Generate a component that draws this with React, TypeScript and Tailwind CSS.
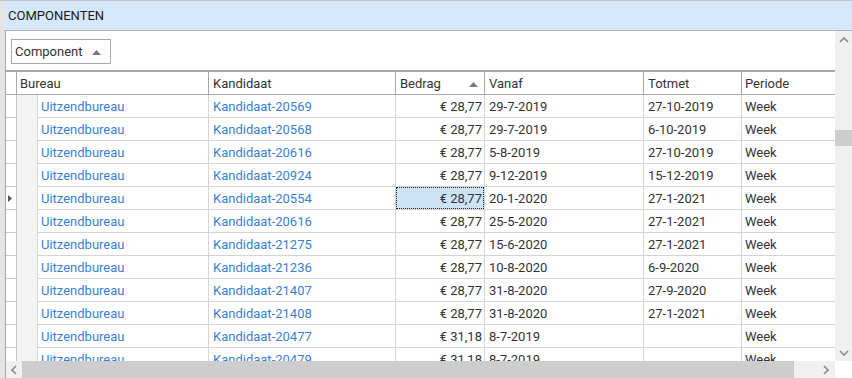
const rows = [
  { k: 'Kandidaat-20569', b: '€ 28,77', v: '29-7-2019', t: '27-10-2019' },
  { k: 'Kandidaat-20568', b: '€ 28,77', v: '29-7-2019', t: '6-10-2019' },
  { k: 'Kandidaat-20616', b: '€ 28,77', v: '5-8-2019', t: '27-10-2019' },
  { k: 'Kandidaat-20924', b: '€ 28,77', v: '9-12-2019', t: '15-12-2019' },
  { k: 'Kandidaat-20554', b: '€ 28,77', v: '20-1-2020', t: '27-1-2021', sel: true },
  { k: 'Kandidaat-20616', b: '€ 28,77', v: '25-5-2020', t: '27-1-2021' },
  { k: 'Kandidaat-21275', b: '€ 28,77', v: '15-6-2020', t: '27-1-2021' },
  { k: 'Kandidaat-21236', b: '€ 28,77', v: '10-8-2020', t: '6-9-2020' },
  { k: 'Kandidaat-21407', b: '€ 28,77', v: '31-8-2020', t: '27-9-2020' },
  { k: 'Kandidaat-21408', b: '€ 28,77', v: '31-8-2020', t: '27-1-2021' },
  { k: 'Kandidaat-20477', b: '€ 31,18', v: '8-7-2019', t: '' },
  { k: 'Kandidaat-20479', b: '€ 31,18', v: '8-7-2019', t: '' },
];

function SortUp() {
  return (
    <svg width="9" height="5" viewBox="0 0 9 5" className="shrink-0">
      <polygon points="0,5 9,5 4.5,0" fill="#7a7a7a" />
    </svg>
  );
}

function Chevron({ dir }: { dir: 'up' | 'down' | 'left' | 'right' }) {
  const pts = {
    up: '1,5 5,1 9,5',
    down: '1,1 5,5 9,1',
    left: '5,1 1,5 5,9',
    right: '1,1 5,5 1,9',
  }[dir];
  const vert = dir === 'up' || dir === 'down';
  return (
    <svg width={vert ? 10 : 6} height={vert ? 6 : 10} viewBox={vert ? '0 0 10 6' : '0 0 6 10'}>
      <polyline points={pts} fill="none" stroke="#8a8a8a" strokeWidth="1.6" />
    </svg>
  );
}

export default function App() {
  return (
    <div className="w-[852px] h-[378px] overflow-hidden bg-white flex flex-col font-['Roboto',sans-serif] text-[13px] text-[#333]">
      {/* title bar */}
      <div className="h-px bg-[#c4c4c4]" />
      <div className="flex h-[30px] shrink-0">
        <div className="w-[4px] bg-[#e4e4e4]" />
        <div className="flex-1 bg-[#d6e8fc] border-b border-[#b4b4b4] flex items-center pl-[4px] pt-px text-[#1a1a1a]">
          COMPONENTEN
        </div>
      </div>

      <div className="flex flex-1 min-h-0">
        <div className="w-[6px] bg-[#e4e4e4] border-r border-[#a8a8a8]" />

        <div className="flex flex-col w-[829px]">
          <div className="flex-1 min-h-0 overflow-hidden">
            {/* toolbar */}
            <div className="h-[39px] pt-[8px] pl-[5px]">
              <div className="w-[100px] h-[25px] border border-[#a8a8a8] flex items-center justify-between pl-[3px] pr-[9px] pt-px">
                <span>Component</span>
                <SortUp />
              </div>
            </div>

            {/* grid */}
            <div className="border-t-2 border-[#a8a8a8]">
              <div className="flex h-[23px] border-b border-[#a8a8a8] pt-[2px]">
                <div className="w-[11px] border-r border-[#a8a8a8] -mt-[2px]" />
                <div className="w-[192px] border-r border-[#a8a8a8] -mt-[2px] pt-[2px] pl-[3px] flex items-center">Bureau</div>
                <div className="w-[187px] border-r border-[#a8a8a8] -mt-[2px] pt-[2px] pl-[4px] flex items-center">Kandidaat</div>
                <div className="w-[89px] border-r border-[#a8a8a8] -mt-[2px] pt-[2px] pl-[4px] pr-[6px] flex items-center justify-between">
                  <span>Bedrag</span>
                  <SortUp />
                </div>
                <div className="w-[159px] border-r border-[#a8a8a8] -mt-[2px] pt-[2px] pl-[4px] flex items-center">Vanaf</div>
                <div className="w-[98px] border-r border-[#a8a8a8] -mt-[2px] pt-[2px] pl-[4px] flex items-center">Totmet</div>
                <div className="flex-1 -mt-[2px] pt-[2px] pl-[3px] flex items-center">Periode</div>
              </div>

              {rows.map((r, i) => (
                <div key={i} className="flex h-[23px]">
                  <div className="w-[11px] border-r border-b border-[#c8c8c8] flex items-center">
                    {r.sel && (
                      <svg width="4" height="7" viewBox="0 0 4 7" className="ml-[2px]">
                        <polygon points="0,0 4,3.5 0,7" fill="#555" />
                      </svg>
                    )}
                  </div>
                  <div className="w-[21px] bg-[#f3f3f3] border-r border-[#d4d4d4]" />
                  <div className="w-[171px] border-r border-b border-[#d4d4d4] pl-[3px] pt-[2px] flex items-center text-[#3a7fd5]">Uitzendbureau</div>
                  <div className="w-[187px] border-r border-b border-[#d4d4d4] pl-[4px] pt-[2px] flex items-center text-[#3a7fd5]">{r.k}</div>
                  <div className="w-[89px] border-r border-b border-[#d4d4d4] flex">
                    {r.sel ? (
                      <div className="flex-1 bg-[#cce4f7] border border-dotted border-[#222] flex items-center justify-end pr-[1px] pt-[2px]">{r.b}</div>
                    ) : (
                      <div className="flex-1 flex items-center justify-end pr-[2px] pt-[2px]">{r.b}</div>
                    )}
                  </div>
                  <div className="w-[159px] border-r border-b border-[#d4d4d4] pl-[4px] pt-[2px] flex items-center">{r.v}</div>
                  <div className="w-[98px] border-r border-b border-[#d4d4d4] pl-[4px] pt-[2px] flex items-center">{r.t}</div>
                  <div className="flex-1 border-b border-[#d4d4d4] pl-[3px] pt-[2px] flex items-center">Week</div>
                </div>
              ))}
            </div>
          </div>

          {/* horizontal scrollbar */}
          <div className="h-[17px] shrink-0 flex bg-[#f0f0f0]">
            <div className="w-[16px] flex items-center justify-center"><Chevron dir="left" /></div>
            <div className="w-[772px] bg-[#cdcdcd]" />
            <div className="flex-1 flex items-center justify-end pr-[6px]"><Chevron dir="right" /></div>
          </div>
        </div>

        {/* vertical scrollbar */}
        <div className="w-[17px] flex flex-col">
          <div className="flex-1 bg-[#f0f0f0] flex flex-col">
            <div className="h-[17px] flex items-center justify-center"><Chevron dir="up" /></div>
            <div className="h-[82px]" />
            <div className="h-[16px] bg-[#cdcdcd]" />
            <div className="flex-1" />
            <div className="h-[17px] flex items-center justify-center"><Chevron dir="down" /></div>
          </div>
          <div className="h-[17px] bg-white" />
        </div>
      </div>
    </div>
  );
}
